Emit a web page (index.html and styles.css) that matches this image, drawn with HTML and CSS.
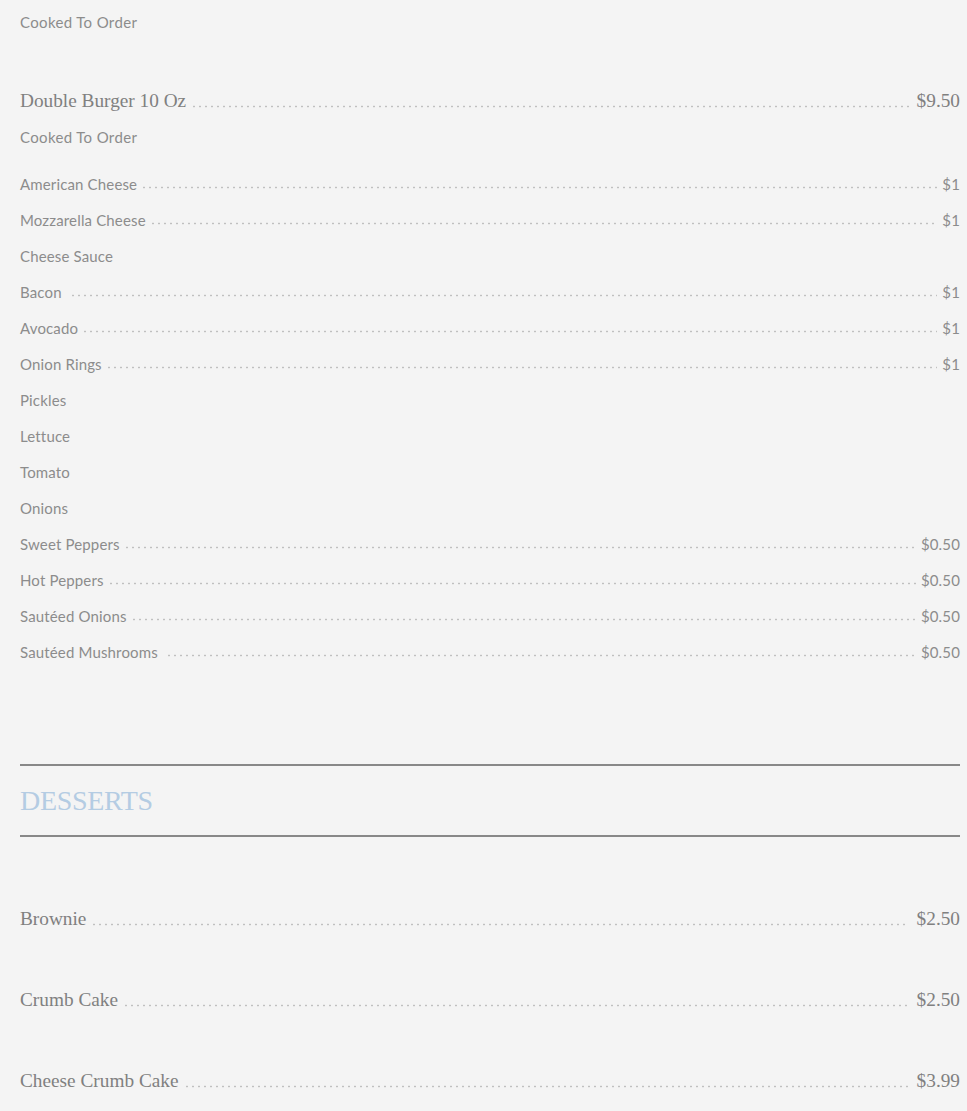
FILE: index.html
```html
<!DOCTYPE html>
<html>
<head>
<meta charset="utf-8">
<link rel="stylesheet" href="styles.css">
</head>
<body>
<div class="menu">
  <div class="item">
    <p class="desc first">Cooked To Order</p>
  </div>

  <div class="item">
    <div class="head">
      <span class="name">Double Burger 10 Oz</span>
      <span class="leader"></span>
      <span class="price">$9.50</span>
    </div>
    <p class="desc">Cooked To Order</p>
    <ul class="addons">
      <li class="addon"><span>American Cheese</span><span class="leader"></span><span class="aprice">$1</span></li>
      <li class="addon"><span>Mozzarella Cheese</span><span class="leader"></span><span class="aprice">$1</span></li>
      <li class="addon"><span>Cheese Sauce</span></li>
      <li class="addon"><span class="wide">Bacon</span><span class="leader"></span><span class="aprice">$1</span></li>
      <li class="addon"><span>Avocado</span><span class="leader"></span><span class="aprice">$1</span></li>
      <li class="addon"><span>Onion Rings</span><span class="leader"></span><span class="aprice">$1</span></li>
      <li class="addon"><span>Pickles</span></li>
      <li class="addon"><span>Lettuce</span></li>
      <li class="addon"><span>Tomato</span></li>
      <li class="addon"><span>Onions</span></li>
      <li class="addon"><span>Sweet Peppers</span><span class="leader"></span><span class="aprice">$0.50</span></li>
      <li class="addon"><span>Hot Peppers</span><span class="leader"></span><span class="aprice">$0.50</span></li>
      <li class="addon"><span>Sautéed Onions</span><span class="leader"></span><span class="aprice">$0.50</span></li>
      <li class="addon"><span class="wide">Sautéed Mushrooms</span><span class="leader"></span><span class="aprice">$0.50</span></li>
    </ul>
  </div>

  <h2 class="section-title">DESSERTS</h2>

  <div class="desserts">
    <div class="head">
      <span class="name">Brownie</span>
      <span class="leader"></span>
      <span class="price">$2.50</span>
    </div>
    <div class="head">
      <span class="name">Crumb Cake</span>
      <span class="leader"></span>
      <span class="price">$2.50</span>
    </div>
    <div class="head">
      <span class="name">Cheese Crumb Cake</span>
      <span class="leader"></span>
      <span class="price">$3.99</span>
    </div>
  </div>
</div>
</body>
</html>
```

FILE: styles.css
```css
html, body {
  margin: 0;
  padding: 0;
  background: #f4f4f4;
}

.menu {
  padding: 4px 7px 0 20px;
  color: #8c8c8c;
  font-family: Lato, "Open Sans", sans-serif;
}

.desc {
  margin: 0;
  font-size: 15px;
  letter-spacing: 0.35px;
  line-height: 36px;
  height: 36px;
}

.first {
  margin-bottom: 43px;
}

.head {
  display: flex;
  height: 36px;
  line-height: 36px;
  font-family: "Liberation Serif", "Times New Roman", serif;
  font-size: 19.3px;
  color: #808080;
}

.head .leader {
  background-position: 0 22px;
  margin: 0 8px 0 5px;
}

.leader {
  flex: 1;
  align-self: stretch;
  background-image: radial-gradient(circle, #c0c0c0 0.8px, rgba(244,244,244,0) 1.2px);
  background-size: 6px 3px;
  background-repeat: repeat-x;
  background-position: 0 20px;
  margin: 0 5px 0 4px;
}

.addons {
  list-style: none;
  margin: 11px 0 0;
  padding: 0;
}

.addon {
  display: flex;
  height: 36px;
  line-height: 36px;
  font-size: 15px;
  letter-spacing: 0.15px;
}

.addon .wide {
  margin-right: 4px;
}

.section-title {
  margin: 94px 0 0;
  border-top: 2px solid #888;
  border-bottom: 2px solid #888;
  height: 69px;
  line-height: 69px;
  font-family: "Liberation Serif", "Times New Roman", serif;
  font-weight: normal;
  font-size: 28px;
  letter-spacing: -0.3px;
  color: #b4cce3;
}

.desserts {
  padding-top: 64px;
  display: flex;
  flex-direction: column;
  gap: 45px;
}
```
